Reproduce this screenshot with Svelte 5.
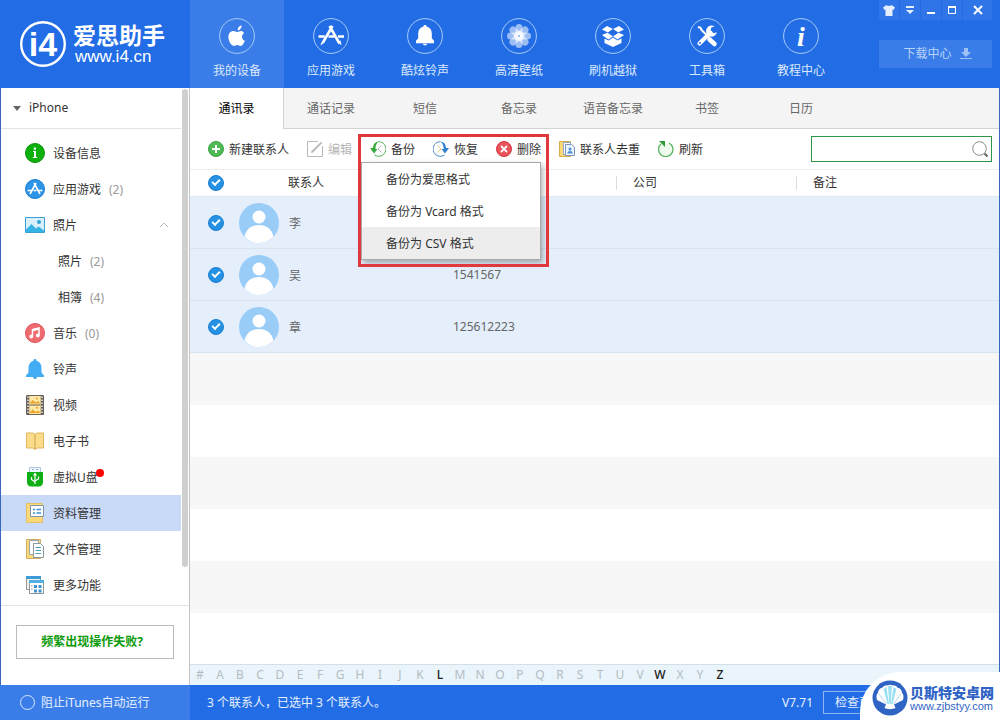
<script>
	const navItems = [
		{ icon: 'apple', label: '我的设备' },
		{ icon: 'store', label: '应用游戏' },
		{ icon: 'bell', label: '酷炫铃声' },
		{ icon: 'flower', label: '高清壁纸' },
		{ icon: 'box', label: '刷机越狱' },
		{ icon: 'tools', label: '工具箱' },
		{ icon: 'info', label: '教程中心' }
	];

	const sideItems = [
		{ icon: 'info', label: '设备信息' },
		{ icon: 'store', label: '应用游戏', count: 2 },
		{ icon: 'photo', label: '照片', open: true },
		{ label: '照片', count: 2, sub: true },
		{ label: '相簿', count: 4, sub: true },
		{ icon: 'music', label: '音乐', count: 0 },
		{ icon: 'bell', label: '铃声' },
		{ icon: 'video', label: '视频' },
		{ icon: 'book', label: '电子书' },
		{ icon: 'usb', label: '虚拟U盘', dot: true },
		{ icon: 'data', label: '资料管理' },
		{ icon: 'files', label: '文件管理' },
		{ icon: 'more', label: '更多功能' }
	];

	const tabs = ['通讯录', '通话记录', '短信', '备忘录', '语音备忘录', '书签', '日历'];
	const formats = ['备份为爱思格式', '备份为 Vcard 格式', '备份为 CSV 格式'];
	const letters = '#ABCDEFGHIJKLMNOPQRSTUVWXYZ'.split('');
	const used = ['L', 'W', 'Z'];

	let contacts = $state([
		{ name: '李', phone: '', checked: true },
		{ name: '吴', phone: '1541567', checked: true },
		{ name: '章', phone: '125612223', checked: true }
	]);
	let activeNav = $state(0);
	let activeSide = $state(10);
	let activeTab = $state(0);
	let activeFormat = $state(2);
	let menuOpen = $state(true);
	let search = $state('');

	let selected = $derived(contacts.filter((c) => c.checked).length);

	function toggleAll(e) {
		for (const c of contacts) c.checked = e.target.checked;
	}
</script>

{#snippet navIcon(name)}
	<svg width="36" height="36" viewBox="0 0 36 36" fill="#fff" aria-hidden="true">
		<circle cx="18" cy="18" r="17.4" fill="none" stroke="#a9cbf8" />
		{#if name === 'apple'}
			<path d="M18.6 12.6c0-2.8 1.7-4.8 4-5.3.2 2.8-1.6 5-4 5.3zM25 15.2c-3 1.9-2.5 6.3.9 7.6-.9 2.4-2.5 5.1-4.3 5.1-1.3 0-1.9-.8-3.4-.8s-2.2.8-3.4.8c-2.6 0-5.4-4.7-5.4-8.8 0-4 2.5-6 4.9-6 1.6 0 2.7 1 3.8 1s2.3-1.1 4.2-1.1c1 0 2.1.7 2.7 2.2z" />
		{:else if name === 'store'}
			<g stroke="#fff" stroke-width="2.6" fill="none">
				<path d="M19.5 8 10.5 23.5M16.500 8l10 17.500" />
				<path d="M5.500 18.500h6.200M15.500 18.500h6M25 18.500h6" />
			</g>
			<path d="m9.200 22.800 2.800 1.500-4.600 3.200zM25 24l2.600-1.400.8 4.800z" />
		{:else if name === 'bell'}
			<path d="M18 7c1 0 1.600.7 1.600 1.600 3.400.8 5.200 3.500 5.200 7v4.600l2.200 2.500v2.500H9v-2.500l2.200-2.500v-4.600c0-3.500 1.800-6.200 5.200-7C16.400 7.700 17 7 18 7zM16 25.800h4c0 1-.8 1.600-2 1.600s-2-.6-2-1.600z" />
		{:else if name === 'flower'}
			{#each [0, 45, 90, 135, 180, 225, 270, 315] as a}
				<rect x="14.500" y="6" width="7" height="12" rx="3.500" opacity=".55" transform="rotate({a} 18 18)" />
			{/each}
			<circle cx="18" cy="18" r="5" opacity=".6" />
			<circle cx="18" cy="18" r="1" fill="#7fa9ee" />
		{:else if name === 'box'}
			<path d="m12 8 6 3-5 3.500L7 11.500zM24 8l-6 3 5 3.500 6-3zM7 17l5.500-2.200 5.500 3.500-4.500 3.200zM29 17l-5.500-2.200-5.500 3.500 4.500 3.200zM9.500 20.500l4 2L18 19.500l4.500 3 4-2v4.500L18 29l-8.500-4z" />
			<path d="m13 14.600 5-3.400 5 3.400-5 3.400z" fill="#226de6" />
		{:else if name === 'tools'}
			<path d="m9 9 2.500.8 1 2.200L25.500 25" stroke="#fff" stroke-width="2" fill="none" />
			<path d="M20.500 21.500 25.500 26" stroke="#fff" stroke-width="4.500" stroke-linecap="round" />
			<path d="M21.500 14.500 10.500 25.500" stroke="#fff" stroke-width="4" stroke-linecap="round" />
			<path d="M25.500 8.500a5.500 5.500 0 1 0 2.400 5.800l-3.400.9-3-2.800.8-3z" />
			<circle cx="11" cy="25" r="1" fill="#226de6" />
		{:else}
			<text x="18" y="28" text-anchor="middle" class="serif-i" font-size="28">i</text>
		{/if}
	</svg>
{/snippet}

{#snippet sideIcon(name)}
	<svg width="20" height="20" viewBox="0 0 20 20" fill="none" aria-hidden="true">
		{#if name === 'info'}
			<circle cx="10" cy="10" r="9.500" fill="#0db00d" stroke="#079207" />
			<path d="M8 8h3v6h1.200v1H7.800v-1H9V9H8zM8.800 4.500H11v2.200H8.800z" fill="#fff" />
		{:else if name === 'store'}
			<circle cx="10" cy="10" r="9.500" fill="#2b93e8" stroke="#1a7bcd" />
			<path d="m11 4-6 11M9 4l6 11M2.500 11.500h4.500M8.500 11.500h3M13.500 11.500h4" stroke="#fff" stroke-width="1.600" />
		{:else if name === 'photo'}
			<path d="M.5 2.500h19v15H.5z" fill="#d7f0fc" stroke="#3b9fd0" />
			<path d="M1 14.500 6.500 9l4.500 4.500 2.500-2 5.500 4V17H1z" fill="#35b3e6" />
			<circle cx="14" cy="7" r="2" fill="#35a5d8" />
		{:else if name === 'music'}
			<circle cx="10" cy="10" r="9.500" fill="#ee6b70" stroke="#dc5459" />
			<path d="M7.500 13.500V6.500l6.500-1.500v7.500" stroke="#fff" stroke-width="1.500" />
			<path d="M7.500 7.200 14 5.700" stroke="#fff" stroke-width="2" />
			<circle cx="6.300" cy="13.500" r="1.900" fill="#fff" />
			<circle cx="12.800" cy="12.500" r="1.900" fill="#fff" />
		{:else if name === 'bell'}
			<path d="M10 0c1 0 1.500.7 1.500 1.700C15 2.700 16.500 5.500 16.500 9v4.500l2.500 3V18H1v-1.500l2.500-3V9c0-3.500 1.500-6.300 5-7.300C8.500.7 9 0 10 0z" fill="#42adf4" />
			<path d="M8 18h4c0 1.200-.8 2-2 2s-2-.8-2-2z" fill="#4aa3df" />
		{:else if name === 'video'}
			<path d="M1.500.5h17v19h-17z" fill="#ffe7a6" stroke="#6e6558" />
			<path d="M3 1v18M17 1v18" stroke="#665d55" stroke-width="2.500" />
			<path d="M3 1.500v18M17 1.500v18" stroke="#fff" stroke-width="1.300" stroke-dasharray="1.500 1.500" />
			<path d="M4.500 10h11" stroke="#665d55" />
			<path d="m4.500 8.500 3-3.500 3.500 2.500L13 6l2.500 2.500zM4.500 18l3-3.500 3.500 2.500 2-1.500 2.500 2.500z" fill="#e9a22b" />
			<circle cx="12" cy="3.500" r="1" fill="#e9a22b" />
			<circle cx="12" cy="12.800" r="1" fill="#e9a22b" />
		{:else if name === 'book'}
			<path d="M1.500 2H8l2 1.500L12 2h6.500v15H12l-2 1.500L8 17H1.500z" fill="#fbdc8a" stroke="#dfb65c" />
			<path d="M10 3.500v15" stroke="#cfa54a" />
		{:else if name === 'usb'}
			<path d="M4.500.5h11v5h-11z" fill="#eef6ff" stroke="#adc5dc" />
			<path d="M7 2.500h2M11 2.500h2" stroke="#8fb0cf" />
			<path d="M2 5h16v10c0 3-2 4.500-4 4.500H6c-2 0-4-1.500-4-4.500z" fill="#0fae15" />
			<path d="M10 17V7.500M10 15l-3.500-2.500V10M10 14l3.500-2V9.500M8.500 8.500 10 6.500l1.500 2" stroke="#fff" stroke-width="1.200" />
		{:else if name === 'data'}
			<path d="M1.500.5h16v19h-16z" fill="#fbd978" stroke="#e3bf66" />
			<path d="M5.500 2.500h13v11h-13z" fill="#fff" stroke="#7f95a8" />
			<path d="M8 6.500h2M8 10h2M11.500 6.500h4.500M11.500 10h4.500" stroke="#3b8fd4" stroke-width="1.300" />
		{:else if name === 'files'}
			<path d="M1.500.5h14v19h-14z" fill="#fbd978" stroke="#cfae62" />
			<path d="M4.500 1.500h9v14h-9z" fill="#fff" stroke="#9aa5ab" />
			<path d="M8.500 4.500h7l3 3v11h-10z" fill="#fff" stroke="#8b989f" />
			<path d="M10.500 8.500H16M10.500 11.500H16M10.500 14.500H16" stroke="#49a1b5" />
		{:else}
			<path d="M1.500 1.500h14v13h-14z" fill="#f3f1e8" stroke="#8f9696" />
			<path d="M1 1h15v3H1z" fill="#3d9cd8" />
			<path d="M4.500 5.500h14v13h-14z" fill="#fff" stroke="#8f9696" />
			<path d="M4 5h15v3H4z" fill="#4fb0e6" />
			<path d="M9 10h3v3H9zM13.500 10h3v3h-3zM9 14.500h3v3H9zM13.500 14.500h3v3h-3z" fill="#3e94d1" />
			<path d="M6 11h1.500M6 14h1.500" stroke="#888" />
		{/if}
	</svg>
{/snippet}

{#snippet toolIcon(name)}
	<svg width="16" height="16" viewBox="0 0 16 16" fill="none" aria-hidden="true">
		{#if name === 'add'}
			<circle cx="8" cy="8" r="7.500" fill="#4fb955" stroke="#3ca343" />
			<path d="M8 4v8M4 8h8" stroke="#fff" stroke-width="2" />
		{:else if name === 'edit'}
			<path d="M11 .5H.5v15h15V5" stroke="#b9b9b9" />
			<path d="m4 12 .5-2L14 .8l1.300 1.200L6 11.500z" fill="#b9b9b9" />
		{:else if name === 'backup'}
			<path d="M8.500.7a7.300 7.300 0 1 1-4 13.300" stroke="#4cb050" />
			<path d="M8.500.7C5 .7 3.200 3 3 7H0l4 5.500L7.500 8H5.500C5.300 5 6.500 2 8.500.7z" fill="#35a93c" />
			<path d="m11.500 4.500-3.500 3.500 3.500 3.500" stroke="#b9b9b9" />
		{:else if name === 'restore'}
			<path d="M7.500.7a7.300 7.300 0 1 0 4 13.300" stroke="#4a86c6" />
			<path d="M7.500.7C11 .7 12.800 3 13 7h3l-4 5.500L8.500 8h2.200c0-3-1-6-3.200-7.300z" fill="#2f7fd2" />
			<path d="m4.500 4.500 3.500 3.500-3.500 3.500" stroke="#dfc77f" />
		{:else if name === 'delete'}
			<circle cx="8" cy="8" r="7.500" fill="#e9545a" stroke="#d2363d" />
			<path d="m5 5 6 6M11 5l-6 6" stroke="#fff" stroke-width="1.800" />
		{:else if name === 'dedupe'}
			<path d="M.5.5h11v15H.5z" fill="#fbd978" stroke="#d6ac4b" />
			<path d="M4.500 1.500h7v12h-7z" fill="#fff" stroke="#8fa4c2" />
			<path d="M6.500 3.500h6l3 2.500v8.500h-9z" fill="#eef5ff" stroke="#7b95bb" />
			<circle cx="11" cy="8" r="1.500" fill="#4d8fd6" />
			<path d="M8.300 12.500c0-3.300 5.400-3.300 5.400 0z" fill="#4d8fd6" />
		{:else}
			<circle cx="8" cy="8.500" r="6.500" fill="#eefaee" />
			<path d="M11 2A7.200 7.200 0 1 1 3 3" stroke="#57b35d" stroke-width="1.300" />
			<path d="M1 0h6v6z" fill="#2f9a3a" />
		{/if}
	</svg>
{/snippet}

<div class="window">
	<header>
		<div class="brand">
			<svg width="46" height="46" viewBox="0 0 46 46" aria-hidden="true">
				<circle cx="23" cy="23" r="21.800" fill="none" stroke="#fff" stroke-width="2.400" />
				<text x="23" y="35" text-anchor="middle" class="logo-text" font-size="34">i4</text>
			</svg>
			<div class="brand-text">
				<strong>爱思助手</strong>
				<span>www.i4.cn</span>
			</div>
		</div>
		<nav>
			{#each navItems as item, i}
				<button class="nav-item" class:active={activeNav === i} onclick={() => (activeNav = i)}>
					{@render navIcon(item.icon)}
					<span>{item.label}</span>
				</button>
			{/each}
		</nav>
		<div class="header-right">
			<div class="window-buttons">
				<button aria-label="皮肤">
					<svg width="12" height="11" viewBox="0 0 12 11" fill="#e4eefc"><path d="M3.500 0c1 1.200 4 1.200 5 0L12 2.500l-1.500 2.500L9.500 4.500V11h-7V4.500L1.500 5 0 2.500z" /></svg>
				</button>
				<button aria-label="菜单">
					<svg width="10" height="10" viewBox="0 0 10 10" fill="#e4eefc"><path d="M1 1h8v2H1zM1 5h8L5 9z" /></svg>
				</button>
				<button aria-label="最小化">
					<svg width="10" height="10" viewBox="0 0 10 10" fill="#fff"><path d="M1 7h8v2H1z" /></svg>
				</button>
				<button aria-label="最大化">
					<svg width="10" height="10" viewBox="0 0 10 10" fill="none"><path d="M1.500 1.500h7v7h-7z" stroke="#fff" /><path d="M1 2h8" stroke="#fff" stroke-width="2" /></svg>
				</button>
				<button class="close" aria-label="关闭">
					<svg width="10" height="10" viewBox="0 0 10 10" fill="none"><path d="m1 1 8 8M9 1 1 9" stroke="#fff" stroke-width="2" /></svg>
				</button>
			</div>
			<button class="download">
				下载中心
				<svg width="12" height="12" viewBox="0 0 12 12" fill="#9dc0f5" aria-hidden="true"><path d="M4 0h4v4h3L6 9 1 4h3zM0 10h12v1H0z" /></svg>
			</button>
		</div>
	</header>

	<div class="body">
		<aside>
			<div class="side-scroll">
				<div class="side-main">
					<button class="device">
						<svg width="8" height="5" viewBox="0 0 8 5" fill="#666" aria-hidden="true"><path d="M0 0h8L4 5z" /></svg>
						iPhone
					</button>
					<ul>
						{#each sideItems as item, i}
							<li>
								<button class="side-item" class:sub={item.sub} class:active={activeSide === i} onclick={() => (activeSide = i)}>
									{#if item.icon}{@render sideIcon(item.icon)}{/if}
									<span class="side-label">{item.label}{#if item.dot}<i class="dot"></i>{/if}</span>
									{#if item.count !== undefined}<span class="count">({item.count})</span>{/if}
									{#if item.open}
										<svg class="chevron" width="10" height="6" viewBox="0 0 10 6" fill="none" aria-hidden="true"><path d="m1 5 4-4 4 4" stroke="#bbb" /></svg>
									{/if}
								</button>
							</li>
						{/each}
					</ul>
				</div>
				<div class="scrollbar"></div>
			</div>
			<div class="help">
				<button>频繁出现操作失败?</button>
			</div>
		</aside>

		<main>
			<div class="tabs">
				{#each tabs as tab, i}
					<button class:active={activeTab === i} onclick={() => (activeTab = i)}>{tab}</button>
				{/each}
			</div>

			<div class="toolbar">
				<button>{@render toolIcon('add')}<span>新建联系人</span></button>
				<button disabled>{@render toolIcon('edit')}<span>编辑</span></button>
				<div class="marked">
					<button onclick={() => (menuOpen = !menuOpen)}>{@render toolIcon('backup')}<span>备份</span></button>
					<button>{@render toolIcon('restore')}<span>恢复</span></button>
					<button>{@render toolIcon('delete')}<span>删除</span></button>
					{#if menuOpen}
						<div class="menu">
							{#each formats as format, i}
								<button class:hover={activeFormat === i} onmouseenter={() => (activeFormat = i)}><span>{format}</span></button>
							{/each}
						</div>
					{/if}
					<div class="frame"></div>
				</div>
				<button>{@render toolIcon('dedupe')}<span>联系人去重</span></button>
				<button>{@render toolIcon('refresh')}<span>刷新</span></button>
				<label class="search">
					<input type="text" aria-label="搜索" bind:value={search} />
					<svg width="16" height="16" viewBox="0 0 16 16" fill="none" aria-hidden="true">
						<circle cx="7.500" cy="7.500" r="6.800" stroke="#888" />
						<path d="m12.500 12.500 3 3" stroke="#666" stroke-width="2" />
					</svg>
				</label>
			</div>

			<table>
				<colgroup>
					<col class="col-check" />
					<col class="col-name" />
					<col class="col-phone" />
					<col class="col-company" />
					<col />
				</colgroup>
				<thead>
					<tr>
						<th class="check"><input type="checkbox" aria-label="全选" checked={selected === contacts.length} onchange={toggleAll} /></th>
						<th class="name-head">联系人</th>
						<th></th>
						<th class="line">公司</th>
						<th class="line">备注</th>
					</tr>
				</thead>
				<tbody>
					{#each contacts as contact}
						<tr>
							<td class="check"><input type="checkbox" aria-label={contact.name} bind:checked={contact.checked} /></td>
							<td class="name">
								<div>
									<svg width="40" height="40" viewBox="0 0 40 40" aria-hidden="true">
										<circle cx="20" cy="20" r="20" fill="#99cdf8" />
										<circle cx="20" cy="14" r="6.500" fill="#fff" />
										<path d="M5.500 33.800C7 26 12.500 22 20 22s13 4 14.500 11.800A20 20 0 0 1 5.500 33.800z" fill="#fff" />
									</svg>
									<span>{contact.name}</span>
								</div>
							</td>
							<td>{contact.phone}</td>
							<td></td>
							<td></td>
						</tr>
					{/each}
				</tbody>
			</table>
			<div class="stripes"></div>

			<div class="letters">
				{#each letters as letter}
					<button class:used={used.includes(letter)}>{letter}</button>
				{/each}
			</div>
		</main>
	</div>

	<footer>
		<button class="itunes"><i></i>阻止iTunes自动运行</button>
		<div class="status">
			<span>{contacts.length} 个联系人，已选中 {selected} 个联系人。</span>
			<span class="version">V7.71</span>
			<button class="update">检查更新</button>
		</div>
	</footer>

	<div class="site-mark">
		<svg width="36" height="36" viewBox="0 0 36 36" aria-hidden="true">
			<circle cx="18" cy="18" r="17.500" fill="#2f63c4" />
			<path d="M14 24.500 5 20c-1-3-.5-6 1-7 0-3 2-5 4-5 1.500-2 4-3 5.500-2.500 1.500-1 3.500-1 5 0 1.500-.5 4 .5 5.500 2.500 2 0 4 2 4 5 1.500 1 2 4 1 7l-9 4.500 1.500 3.500c-3 1.500-8 1.500-11 0z" fill="#fff" />
			<path d="m15.500 24-4-15 3-2 2.500 17zM17.300 24 16 6h4l-1.300 18zM20.500 24l4-15-3-2-2.500 17z" fill="#9be0f3" />
			<path d="M14.500 24 7 14M21.500 24 29 14" stroke="#b8d4ee" fill="none" />
		</svg>
		<div>
			<strong>贝斯特安卓网</strong>
			<span>www.zjbstyy.com</span>
		</div>
	</div>
</div>

<style>
	:global(body) {
		background: #fff;
		font-family: 'Noto Sans', 'Noto Sans CJK SC', sans-serif;
		font-size: 12px;
		line-height: 18px;
		color: #333;
	}

	button {
		font: inherit;
		color: inherit;
		background: none;
		border: none;
		padding: 0;
		margin: 0;
		white-space: nowrap;
		cursor: pointer;
	}

	svg {
		display: block;
		flex-shrink: 0;
	}

	.window {
		position: relative;
		display: flex;
		flex-direction: column;
		min-height: 100vh;
	}

	header {
		display: flex;
		height: 88px;
		background: #226de6;
		color: #fff;
	}

	.brand {
		display: flex;
		align-items: center;
		gap: 7px;
		width: 190px;
		padding-left: 20px;
		box-sizing: border-box;
		flex-shrink: 0;
	}

	.logo-text {
		font-family: 'Liberation Sans', sans-serif;
		font-weight: bold;
		fill: #fff;
	}

	.serif-i {
		font-family: 'Liberation Serif', serif;
		font-weight: bold;
		font-style: italic;
	}

	.brand-text {
		display: flex;
		flex-direction: column;
	}

	.brand-text strong {
		font-family: 'Noto Sans CJK SC', sans-serif;
		font-size: 23px;
		line-height: 26px;
		white-space: nowrap;
	}

	.brand-text span {
		font-family: 'Liberation Sans', sans-serif;
		font-size: 17px;
		line-height: 20px;
		padding-left: 2px;
	}

	nav {
		display: flex;
		flex: 1;
	}

	.nav-item {
		display: flex;
		flex-direction: column;
		align-items: center;
		gap: 8px;
		width: 94px;
		padding-top: 18px;
		color: #dce9fb;
	}

	.nav-item.active {
		background: #3b7de8;
	}

	.header-right {
		display: flex;
		flex-direction: column;
		gap: 20px;
		width: 113px;
		margin-right: 8px;
	}

	.window-buttons {
		display: flex;
		gap: 1px;
		height: 20px;
	}

	.window-buttons button {
		display: grid;
		place-items: center;
		width: 20px;
		background: #3075e7;
	}

	.window-buttons .close {
		flex: 1;
	}

	.download {
		display: flex;
		align-items: center;
		justify-content: center;
		gap: 8px;
		height: 28px;
		padding-left: 4px;
		background: #3b7de8;
		color: #b9d3f8;
	}

	.body {
		display: flex;
		flex: 1;
		border-left: 1px solid #3a68bd;
		border-right: 1px solid #3a68bd;
	}

	aside {
		display: flex;
		flex-direction: column;
		width: 189px;
		box-sizing: border-box;
		border-right: 1px solid #c4c4c4;
		flex-shrink: 0;
	}

	.side-scroll {
		display: flex;
		border-bottom: 1px solid #e2e2e2;
		padding-bottom: 2px;
	}

	.side-main {
		flex: 1;
	}

	.scrollbar {
		width: 6px;
		margin: 1px 1px 36px;
		border-radius: 3px;
		background: #cfcfcf;
	}

	.device {
		display: flex;
		align-items: center;
		gap: 8px;
		width: 100%;
		height: 41px;
		padding-left: 12px;
		border-bottom: 1px solid #e2e2e2;
	}

	ul {
		list-style: none;
		margin: 0;
		padding: 6px 0 0;
	}

	.side-item {
		display: flex;
		align-items: center;
		gap: 8px;
		width: 100%;
		height: 36px;
		padding: 0 12px 0 24px;
	}

	.side-item span {
		padding-top: 2px;
	}

	.side-item.sub {
		padding-left: 57px;
	}

	.side-item.active {
		background: #c9daf8;
	}

	.side-label {
		position: relative;
	}

	.dot {
		position: absolute;
		top: 2px;
		right: -6px;
		width: 8px;
		height: 8px;
		border-radius: 50%;
		background: #f00;
	}

	.side-item .count {
		color: #999;
	}

	.chevron {
		margin-left: auto;
	}

	.help {
		padding: 19px 15px;
	}

	.help button {
		width: 100%;
		height: 34px;
		padding-right: 6px;
		border: 1px solid #bbb;
		color: #0a9a0a;
		font-weight: bold;
	}

	main {
		display: flex;
		flex-direction: column;
		flex: 1;
		min-width: 0;
	}

	.tabs {
		display: flex;
		height: 41px;
		box-sizing: border-box;
		background: #f4f4f4;
		box-shadow: inset 0 -1px #d4d4d4;
	}

	.tabs button {
		width: 94px;
		color: #666;
	}

	.tabs .active {
		background: #fff;
		color: #000;
		border-right: 1px solid #d4d4d4;
	}

	.toolbar {
		display: flex;
		align-items: center;
		gap: 18px;
		height: 40px;
		padding: 0 7px 0 18px;
		border-bottom: 1px solid #eee;
	}

	.toolbar button {
		display: flex;
		align-items: center;
		gap: 5px;
	}

	.toolbar span,
	.name span {
		padding-top: 2px;
	}

	.toolbar button:disabled {
		color: #b5b5b5;
	}

	.marked {
		position: relative;
		display: flex;
		gap: 18px;
		height: 40px;
	}

	.menu {
		position: absolute;
		z-index: 2;
		top: 33px;
		left: -9px;
		width: 178px;
		background: #fff;
		border: 1px solid #aaa;
		box-shadow: 2px 3px 6px rgba(0, 0, 0, 0.3);
	}

	.toolbar .menu button {
		width: 100%;
		height: 32px;
		padding-left: 24px;
	}

	.toolbar .menu .hover {
		background: #ededed;
	}

	/* red outline round the backup actions and their menu */
	.frame {
		position: absolute;
		z-index: 3;
		top: 5px;
		left: -12px;
		right: -8px;
		height: 127px;
		border: 3px solid #e0383c;
		pointer-events: none;
	}

	.search {
		display: flex;
		align-items: center;
		width: 181px;
		height: 26px;
		box-sizing: border-box;
		margin-left: auto;
		padding-right: 3px;
		border: 1px solid #2f9447;
	}

	.search input {
		flex: 1;
		min-width: 0;
		padding: 0 6px;
		border: none;
		outline: none;
		font: inherit;
		background: none;
	}

	table {
		width: 100%;
		table-layout: fixed;
		border-spacing: 0;
	}

	.col-check {
		width: 48px;
	}

	.col-name {
		width: 198px;
	}

	.col-phone,
	.col-company {
		width: 180px;
	}

	th,
	td {
		padding: 0 0 0 17px;
		text-align: left;
		box-sizing: border-box;
	}

	th {
		height: 27px;
		font-weight: normal;
		border-bottom: 1px solid #dde8f2;
	}

	th.line {
		background: linear-gradient(#ddd, #ddd) no-repeat left center / 1px 14px;
	}

	th.name-head {
		padding-left: 50px;
	}

	td {
		height: 52px;
		background: #e4effb;
		border-bottom: 1px solid #d8e4ef;
		color: #666;
	}

	.name {
		padding-left: 1px;
	}

	.name div {
		display: flex;
		align-items: center;
		gap: 10px;
	}

	.check input {
		appearance: none;
		display: grid;
		place-items: center;
		width: 16px;
		height: 16px;
		margin: 0 0 0 1px;
		border: 1px solid #bbb;
		border-radius: 50%;
		background: #fff;
	}

	.check input:checked {
		border-color: #1b7fd0;
		background: #2491e4;
	}

	.check input:checked::before {
		content: '';
		width: 6px;
		height: 3px;
		margin-bottom: 3px;
		border-left: 2px solid #fff;
		border-bottom: 2px solid #fff;
		transform: rotate(-45deg);
	}

	.stripes {
		flex: 1;
		background: repeating-linear-gradient(#f7f7f7 0 52px, #fff 52px 104px);
	}

	.letters {
		display: flex;
		height: 20px;
		border-top: 1px solid #d5dfe8;
		background: #e9f4fb;
	}

	.letters button {
		width: 20px;
		color: #b5bcc2;
	}

	.letters .used {
		color: #222;
		font-weight: 500;
	}

	footer {
		display: flex;
		height: 35px;
		background: #226de6;
		color: #e6f0fd;
	}

	.itunes {
		display: flex;
		align-items: center;
		gap: 6px;
		width: 190px;
		padding-left: 20px;
		background: #3b7de8;
		flex-shrink: 0;
	}

	.itunes i {
		width: 13px;
		height: 13px;
		border: 1px solid #dbe8fb;
		border-radius: 50%;
	}

	.status {
		display: flex;
		align-items: center;
		flex: 1;
		padding: 0 105px 0 17px;
	}

	.version {
		margin-left: auto;
		margin-right: 10px;
	}

	.update {
		width: 72px;
		height: 23px;
		border: 1px solid #8fb6f2;
	}

	.site-mark {
		position: absolute;
		right: 0;
		bottom: 0;
		z-index: 4;
		display: flex;
		align-items: center;
		gap: 2px;
		width: 140px;
		height: 48px;
		box-sizing: border-box;
		padding: 4px 0 0 12px;
		border-top-left-radius: 40px;
		background: #fff;
		color: #2f63c4;
	}

	.site-mark div {
		display: flex;
		flex-direction: column;
	}

	.site-mark strong {
		font-family: 'Noto Sans CJK SC', sans-serif;
		font-size: 14px;
		font-weight: 900;
		line-height: 15px;
		white-space: nowrap;
	}

	.site-mark span {
		font-family: 'Liberation Sans', sans-serif;
		font-size: 11px;
		line-height: 12px;
	}
</style>
